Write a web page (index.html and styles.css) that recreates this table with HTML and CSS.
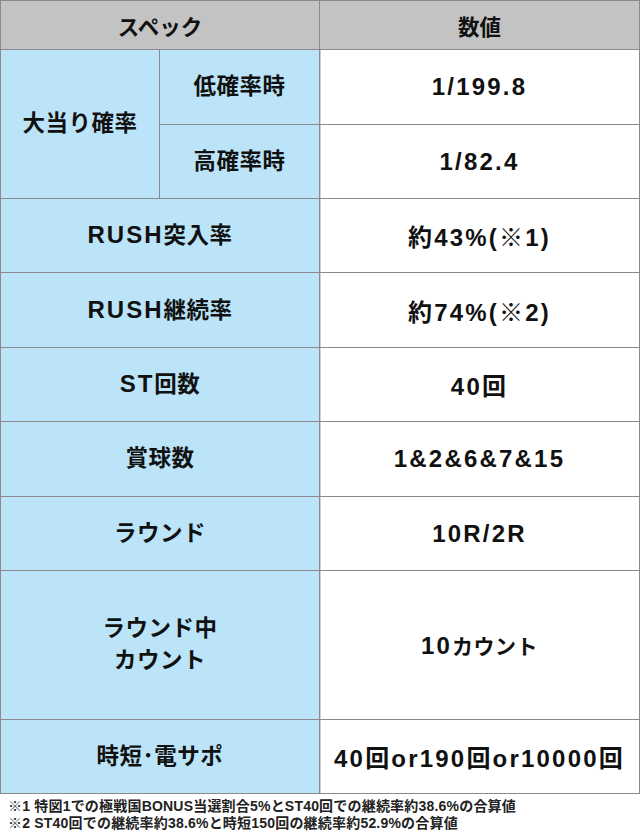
FILE: index.html
```html
<!DOCTYPE html>
<html lang="ja">
<head>
<meta charset="utf-8">
<title>スペック</title>
<link rel="stylesheet" href="styles.css">
</head>
<body>
<table class="spec">
  <colgroup>
    <col class="c1"><col class="c2"><col class="c3">
  </colgroup>
  <thead>
    <tr class="r-head"><th colspan="2">スペック</th><th>数値</th></tr>
  </thead>
  <tbody>
    <tr class="r75"><td class="lbl" rowspan="2">大当り確率</td><td class="lbl">低確率時</td><td class="val">1/199.8</td></tr>
    <tr class="r74"><td class="lbl">高確率時</td><td class="val">1/82.4</td></tr>
    <tr class="r74"><td class="lbl" colspan="2"><span class="en">RUSH</span>突入率</td><td class="val">約43%(※1)</td></tr>
    <tr class="r75"><td class="lbl" colspan="2"><span class="en">RUSH</span>継続率</td><td class="val">約74%(※2)</td></tr>
    <tr class="r74"><td class="lbl" colspan="2"><span class="en">ST</span>回数</td><td class="val">40回</td></tr>
    <tr class="r75"><td class="lbl" colspan="2">賞球数</td><td class="val">1&amp;2&amp;6&amp;7&amp;15</td></tr>
    <tr class="r74"><td class="lbl" colspan="2">ラウンド</td><td class="val">10R/2R</td></tr>
    <tr class="r149"><td class="lbl" colspan="2">ラウンド中<br>カウント</td><td class="val">10<span class="ja">カウント</span></td></tr>
    <tr class="r74"><td class="lbl" colspan="2">時短･電サポ</td><td class="val">40回or190回or10000回</td></tr>
  </tbody>
</table>
<div class="notes">
  <p>※1 特図1での極戦国BONUS当選割合5%とST40回での継続率約38.6%の合算値</p>
  <p>※2 ST40回での継続率約38.6%と時短150回の継続率約52.9%の合算値</p>
</div>
</body>
</html>
```
FILE: styles.css
```css
html, body {
  margin: 0;
  padding: 0;
  background: #ffffff;
}
body {
  width: 640px;
  font-family: "Liberation Sans", "Noto Sans CJK JP", sans-serif;
  font-weight: bold;
  color: #111111;
}
.spec {
  width: 640px;
  border-collapse: collapse;
  table-layout: fixed;
}
.c1 { width: 159px; }
.c2 { width: 160px; }
.c3 { width: 320px; }
.spec th,
.spec td {
  border: 1px solid #8a8a8a;
  padding: 0;
  text-align: center;
  vertical-align: middle;
}
.spec th {
  background: #c3c3c3;
  font-size: 21.5px;
  height: 48px;
  font-weight: bold;
}
.lbl {
  background: #bbe4f8;
  font-size: 22.5px;
  letter-spacing: 0.5px;
  line-height: 32px;
}
.lbl .en {
  font-size: 24px;
  letter-spacing: 2px;
}
.val {
  background: #ffffff;
  font-size: 24px;
  letter-spacing: 2.2px;
  box-shadow: inset 1px 0 0 #cfcfcf;
}
.val .ja {
  font-size: 21px;
  letter-spacing: 0.5px;
}
.r74 td { height: 73px; }
.r75 td { height: 74px; }
.r149 td { height: 148px; }
.notes {
  padding: 4px 0 0 8px;
  font-size: 14px;
  letter-spacing: 0.2px;
  line-height: 17px;
  color: #222222;
}
.notes p {
  margin: 0;
  white-space: nowrap;
}
```
